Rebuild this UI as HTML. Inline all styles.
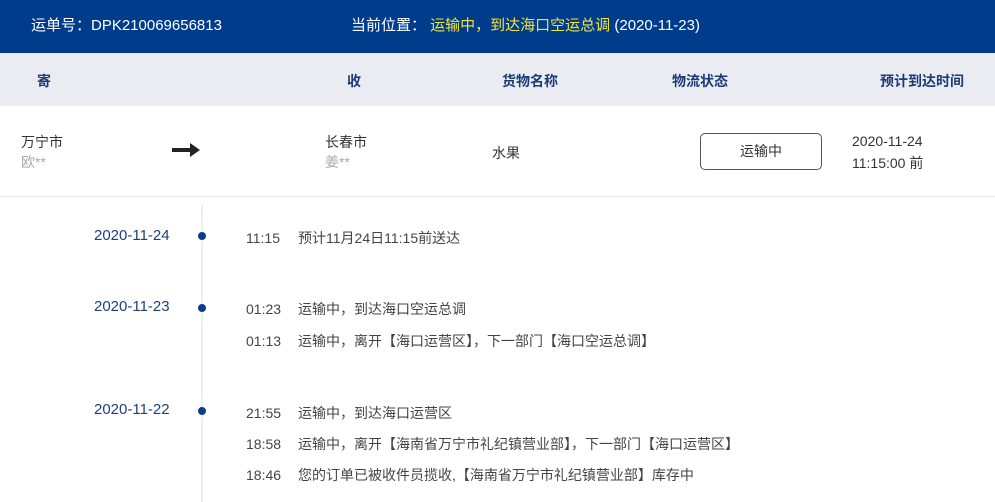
<!DOCTYPE html>
<html><head><meta charset="utf-8"><style>
*{margin:0;padding:0;box-sizing:border-box}
body{width:995px;height:502px;overflow:hidden;background:#fff;font-family:"Liberation Sans","Noto Sans CJK SC",sans-serif;font-size:14px;color:#333;position:relative}
.a{position:absolute;white-space:nowrap;line-height:20px}
.top{position:absolute;left:0;top:0;width:995px;height:53px;background:#003c8c;color:#fff;font-size:15px}
.hd{position:absolute;left:0;top:53px;width:995px;height:53px;background:#ebecf1;color:#1a3a78;font-weight:bold;font-size:14px}
.g{color:#aaa}
.d{color:#1d3f7a;font-size:15px}
.dot{position:absolute;left:198px;width:8px;height:8px;border-radius:50%;background:#0b3d8c}
.t{color:#444;font-size:14px}
</style></head><body>
<div class="top">
<div class="a" style="left:31px;top:16px">运单号：DPK210069656813</div>
<div class="a" style="left:351px;top:16px">当前位置： <span style="color:#f2e63a">运输中，到达海口空运总调</span> (2020-11-23)</div>
</div>
<div class="hd">
<div class="a" style="left:37px;top:18px">寄</div>
<div class="a" style="left:347px;top:18px">收</div>
<div class="a" style="left:502px;top:18px">货物名称</div>
<div class="a" style="left:672px;top:18px">物流状态</div>
<div class="a" style="left:880px;top:18px">预计到达时间</div>
</div>
<div class="a" style="left:21px;top:132px">万宁市</div>
<div class="a g" style="left:21px;top:152px">欧**</div>
<svg class="a" style="left:172px;top:142px" width="28" height="16"><rect x="0" y="6" width="20" height="4" fill="#222"/><path d="M18 1 L28 8 L18 15Z" fill="#222"/></svg>
<div class="a" style="left:325px;top:132px">长春市</div>
<div class="a g" style="left:325px;top:152px">姜**</div>
<div class="a" style="left:492px;top:143px">水果</div>
<div class="a" style="left:700px;top:133px;width:122px;height:37px;border:1px solid #555;border-radius:5px;text-align:center;line-height:35px">运输中</div>
<div class="a" style="left:852px;top:131px">2020-11-24</div>
<div class="a" style="left:852px;top:153px">11:15:00 前</div>
<div class="a" style="left:0;top:196px;width:995px;height:1px;background:#e6e6e6"></div>
<div class="a" style="left:201px;top:205px;width:2px;height:297px;background:#eceef3"></div>
<div class="a d" style="left:94px;top:226px">2020-11-24</div><div class="dot" style="top:232px"></div>
<div class="a t" style="left:246px;top:228px">11:15</div><div class="a t" style="left:298px;top:228px">预计11月24日11:15前送达</div>
<div class="a d" style="left:94px;top:297px">2020-11-23</div><div class="dot" style="top:304px"></div>
<div class="a t" style="left:246px;top:299px">01:23</div><div class="a t" style="left:298px;top:299px">运输中，到达海口空运总调</div>
<div class="a t" style="left:246px;top:331px">01:13</div><div class="a t" style="left:298px;top:331px">运输中，离开【海口运营区】，下一部门【海口空运总调】</div>
<div class="a d" style="left:94px;top:400px">2020-11-22</div><div class="dot" style="top:407px"></div>
<div class="a t" style="left:246px;top:403px">21:55</div><div class="a t" style="left:298px;top:403px">运输中，到达海口运营区</div>
<div class="a t" style="left:246px;top:434px">18:58</div><div class="a t" style="left:298px;top:434px">运输中，离开【海南省万宁市礼纪镇营业部】，下一部门【海口运营区】</div>
<div class="a t" style="left:246px;top:465px">18:46</div><div class="a t" style="left:298px;top:465px">您的订单已被收件员揽收,【海南省万宁市礼纪镇营业部】库存中</div>
</body></html>
